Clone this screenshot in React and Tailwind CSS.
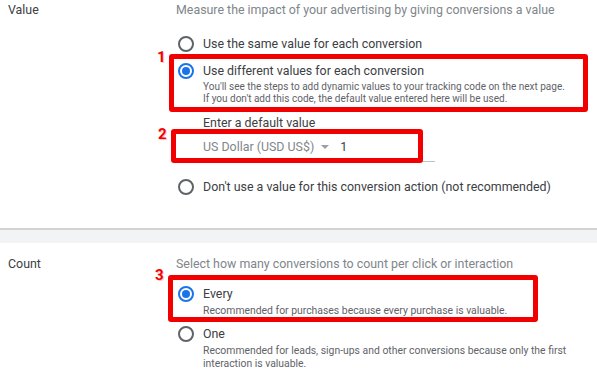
import React from "react";

function Radio({ checked }) {
  return checked ? (
    <div className="w-[16px] h-[16px] rounded-full border-2 border-[#1a73e8] flex items-center justify-center">
      <div className="w-[8px] h-[8px] rounded-full bg-[#1a73e8]" />
    </div>
  ) : (
    <div className="w-[16px] h-[16px] rounded-full border-2 border-[#5f6368]" />
  );
}

function Option({ checked, label, sub, subClass = "text-[10px] leading-[12px]", className = "" }) {
  return (
    <div className={"flex " + className}>
      <div className="w-[27px] pl-[2px] pt-[2px]">
        <Radio checked={checked} />
      </div>
      <div>
        <div className="text-[12.4px] leading-5 text-[#3c4043]">{label}</div>
        {sub && <div className={subClass + " text-[#5f6368]"}>{sub}</div>}
      </div>
    </div>
  );
}

function Badge({ n, className }) {
  return (
    <div
      className={
        "absolute text-[15px] font-bold leading-none text-[#f00000] [text-shadow:1px_1px_0_#ffc0c0] " +
        className
      }
    >
      {n}
    </div>
  );
}

export default function App() {
  return (
    <div
      className="relative w-[597px] h-[392px] overflow-hidden bg-white"
      style={{ fontFamily: "Roboto, 'Liberation Sans', sans-serif" }}
    >
      {/* Value section */}
      <div className="flex pb-[31px]">
        <div className="w-[176px] pl-[8px] text-[12.4px] leading-5 text-[#3c4043]">Value</div>
        <div className="flex-1">
          <div className="text-[12.4px] leading-5 text-[#80868b]">
            Measure the impact of your advertising by giving conversions a value
          </div>
          <Option className="mt-[14px]" label="Use the same value for each conversion" />
          <Option
            className="mt-[7px]"
            checked
            label="Use different values for each conversion"
            sub={
              <>
                <div>You'll see the steps to add dynamic values to your tracking code on the next page.</div>
                <div>If you don't add this code, the default value entered here will be used.</div>
              </>
            }
          />
          <div className="ml-[27px] mt-[8px] text-[12.4px] leading-5 text-[#3c4043]">Enter a default value</div>
          <div className="ml-[27px] w-[232px] pt-[4px] pb-[4px] border-b border-[#bdc1c6] flex items-center text-[12.4px] leading-5">
            <span className="text-[#80868b]">US Dollar (USD US$)</span>
            <svg width="8" height="4" viewBox="0 0 8 4" className="ml-[7px]">
              <path d="M0 0 L8 0 L4 4 Z" fill="#9aa0a6" />
            </svg>
            <span className="ml-[11px] text-[#3c4043]">1</span>
          </div>
          <Option className="mt-[15px]" label="Don't use a value for this conversion action (not recommended)" />
        </div>
      </div>

      {/* Separator */}
      <div className="h-[2px] bg-[#d3d3d3]" />
      <div className="h-[13px] bg-[#f1f3f4]" />

      {/* Count section */}
      <div className="flex pt-[11px]">
        <div className="w-[176px] pl-[8px] text-[12.4px] leading-5 text-[#3c4043]">Count</div>
        <div className="flex-1">
          <div className="text-[12.4px] leading-5 text-[#80868b]">
            Select how many conversions to count per click or interaction
          </div>
          <Option
            className="mt-[10px]"
            checked
            label="Every"
            subClass="text-[10.4px] leading-[13px]"
            sub="Recommended for purchases because every purchase is valuable."
          />
          <Option
            className="mt-[7px]"
            label="One"
            subClass="text-[10.4px] leading-[13px]"
            sub={
              <>
                <div>Recommended for leads, sign-ups and other conversions because only the first</div>
                <div>interaction is valuable.</div>
              </>
            }
          />
        </div>
      </div>

      {/* Annotations */}
      <div className="absolute left-[169px] top-[54px] w-[419px] h-[58px] border-[5px] border-[#f20000] rounded-[3px]" />
      <div className="absolute left-[171px] top-[129px] w-[252px] h-[34px] border-[5px] border-[#f20000] rounded-[3px]" />
      <div className="absolute left-[168px] top-[275px] w-[370px] h-[47px] border-[5px] border-[#f20000] rounded-[3px]" />
      <Badge n="1" className="left-[157px] top-[50px]" />
      <Badge n="2" className="left-[158px] top-[127px]" />
      <Badge n="3" className="left-[155px] top-[268px]" />
    </div>
  );
}
